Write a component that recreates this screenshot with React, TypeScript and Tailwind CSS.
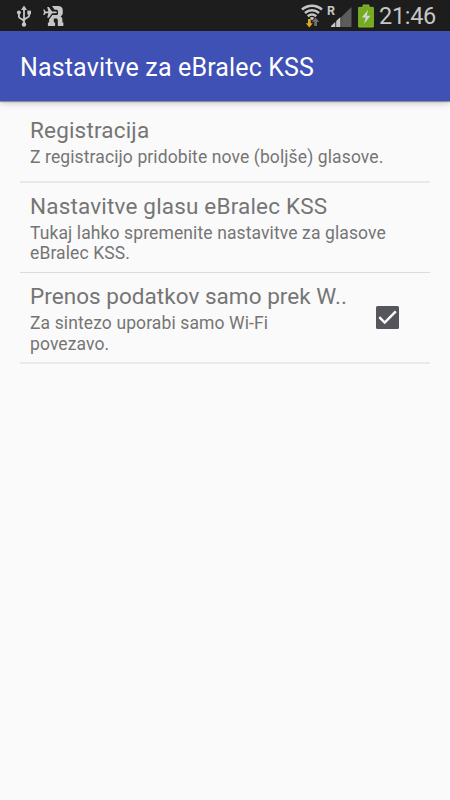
import type { ReactNode } from "react";

const UsbIcon = () => (
  <svg width="16" height="24" viewBox="0 0 16 24" fill="none" stroke="#c6c6c6" strokeWidth="1.8">
    <path d="M8 4v17M2.9 8v5c0 1.8 5.1 1.9 5.1 4.8M13.1 9v3c0 1.8-5.1 1.9-5.1 4.8" />
    <path d="M5 6 8 1.5 11 6z" fill="#c6c6c6" stroke="none" />
    <circle cx="2.9" cy="8.6" r="2" fill="#c6c6c6" stroke="none" />
    <path d="M11.3 6.6h3.7v3.8h-3.7z" fill="#c6c6c6" stroke="none" />
    <circle cx="8" cy="20.5" r="2.2" fill="#c6c6c6" stroke="none" />
  </svg>
);

// Roaming notification: a plane flying into a bold R
const RoamingIcon = () => (
  <svg width="21" height="20" viewBox="0 0 21 20" fill="#c6c6c6">
    <path d="M9 0h6c3.2 0 4.8 1.6 4.8 4.4v2.2c0 2-.8 3.3-2.3 4 1.3.6 1.9 1.7 1.9 3.3v2.6h1V20h-5.6v-5.6c0-1.3-.6-1.9-1.8-1.9h-2.2v4h1.3V20H4.9v-3.5h1.2v-3L9.4 9H13c1.3 0 2-.5 2-1.6V5.4c0-1.1-.7-1.7-2-1.7h-1.5z" />
    <path
      d="M.2 3.5h1.2l1.2 1.9h2.8L4.2.9h1.7l3.2 4.5H12c1.2 0 2 .4 2 .9s-.8.9-2 .9H9.1l-3.2 4.5H4.2l1.2-4.5H2.6L1.4 9.1H.2L1 6.3z"
      stroke="#1d1d1d"
      strokeWidth="1.4"
      paintOrder="stroke"
    />
  </svg>
);

const WifiIcon = () => (
  <svg width="22" height="24" viewBox="0 0 22 24" fill="none">
    <g stroke="#c6c6c6" strokeWidth="2.6">
      <path d="M1 5.6c5.8-5.1 14.2-5.1 20 0" />
      <path d="M4 9c4.2-3.6 9.8-3.6 14 0" />
      <path d="M6.8 12.3c2.6-2.2 5.8-2.2 8.4 0" />
    </g>
    <path d="M8.7 13.8c1.3-1.1 3.3-1.1 4.6 0L11 16.5z" fill="#c6c6c6" />
    <path d="M7 15h2.8v4.3h2L8.4 23.5l-3.6-4.2H7z" fill="#e0ac18" />
    <path d="M13.2 22v-4.2h-2.4l3.8-4 3.8 4H16V22z" fill="#707070" />
  </svg>
);

const SignalIcon = () => (
  <svg width="25" height="24" viewBox="0 0 25 24">
    <path d="M24.5 3v20H4z" fill="#5c5c5c" />
    <path d="M4 23v-1l4.2-4.1V23zM9.2 23v-6l4.2-4.1V23z" fill="#c6c6c6" />
    <path d="M8.7 15v8M13.8 11v12" stroke="#1d1d1d" strokeWidth="0.8" opacity="0.5" />
    <text x="0" y="11.2" fontSize="12.5" fontWeight="700" fill="#c6c6c6">
      R
    </text>
  </svg>
);

const BatteryIcon = () => (
  <svg width="16" height="24" viewBox="0 0 16 24">
    <path d="M5 1h6v2.4h4.3V23H.7V3.4H5z" fill="#75ab20" stroke="#86b92f" />
    <path d="M10.2 5.7 3.8 13.6h3.9L6 20l6.4-8.3H8.6z" fill="#d5d5d5" />
  </svg>
);

const StatusBar = () => (
  <div className="flex h-[31px] items-center justify-between bg-[#1d1d1d] pt-px pr-3.5 pl-4">
    <div className="flex items-center gap-[11px]">
      <UsbIcon />
      <RoamingIcon />
    </div>
    <div className="flex items-center">
      <WifiIcon />
      <div className="ml-[4px]">
        <SignalIcon />
      </div>
      <div className="ml-[6px]">
        <BatteryIcon />
      </div>
      <span className="ml-[5px] w-[57px] text-[23.5px] leading-[30px] tracking-[-0.3px] whitespace-nowrap text-[#c6c6c6]">
        21:46
      </span>
    </div>
  </div>
);

type PreferenceProps = {
  title: string;
  summary: ReactNode;
  className: string;
  children?: ReactNode;
};

const Preference = ({ title, summary, className, children }: PreferenceProps) => (
  <li className={`flex items-start justify-between px-2.5 ${className}`}>
    <div>
      <h2 className="text-[22.5px] leading-[27px] whitespace-nowrap">{title}</h2>
      <p className="mt-[3px] text-[17.5px] leading-[20.5px] tracking-[0.11px] whitespace-nowrap">{summary}</p>
    </div>
    {children}
  </li>
);

export default function App() {
  return (
    <div className="flex h-[800px] w-[450px] flex-col overflow-hidden bg-[#fafafa] font-[Roboto,sans-serif] text-[#757575]">
      <StatusBar />
      <header className="z-10 flex h-[70px] items-center bg-[#3f51b5] px-5 pt-[3px] shadow-[0_1px_1px_rgba(0,0,0,0.35),0_3px_6px_rgba(0,0,0,0.16)]">
        <h1 className="text-[25px] leading-[30px] tracking-[0.15px] whitespace-nowrap text-white">
          Nastavitve za eBralec KSS
        </h1>
      </header>
      <ul className="px-5">
        <Preference
          className="h-[82px] border-b-2 border-[#e9e9e9] pt-4 tracking-[0.18px]"
          title="Registracija"
          summary="Z registracijo pridobite nove (boljše) glasove."
        />
        <Preference
          className="h-[90px] border-b border-[#dcdcdc] pt-[9.5px] tracking-[0.18px]"
          title="Nastavitve glasu eBralec KSS"
          summary={
            <>
              Tukaj lahko spremenite nastavitve za glasove
              <br />
              eBralec KSS.
            </>
          }
        />
        <Preference
          className="h-[91px] border-b-2 border-[#e9e9e9] pt-[10px] tracking-[0.04px]"
          title="Prenos podatkov samo prek W.."
          summary={
            <>
              Za sintezo uporabi samo Wi-Fi
              <br />
              povezavo.
            </>
          }
        >
          <svg className="mt-[23px] mr-[21px]" width="23" height="23" viewBox="0 0 23 23">
            <rect width="23" height="23" rx="1.5" fill="#55565c" />
            <path d="m3.3 11.2 5.4 5.4L19.8 5.4" fill="none" stroke="#fff" strokeWidth="2.4" />
          </svg>
        </Preference>
      </ul>
    </div>
  );
}
